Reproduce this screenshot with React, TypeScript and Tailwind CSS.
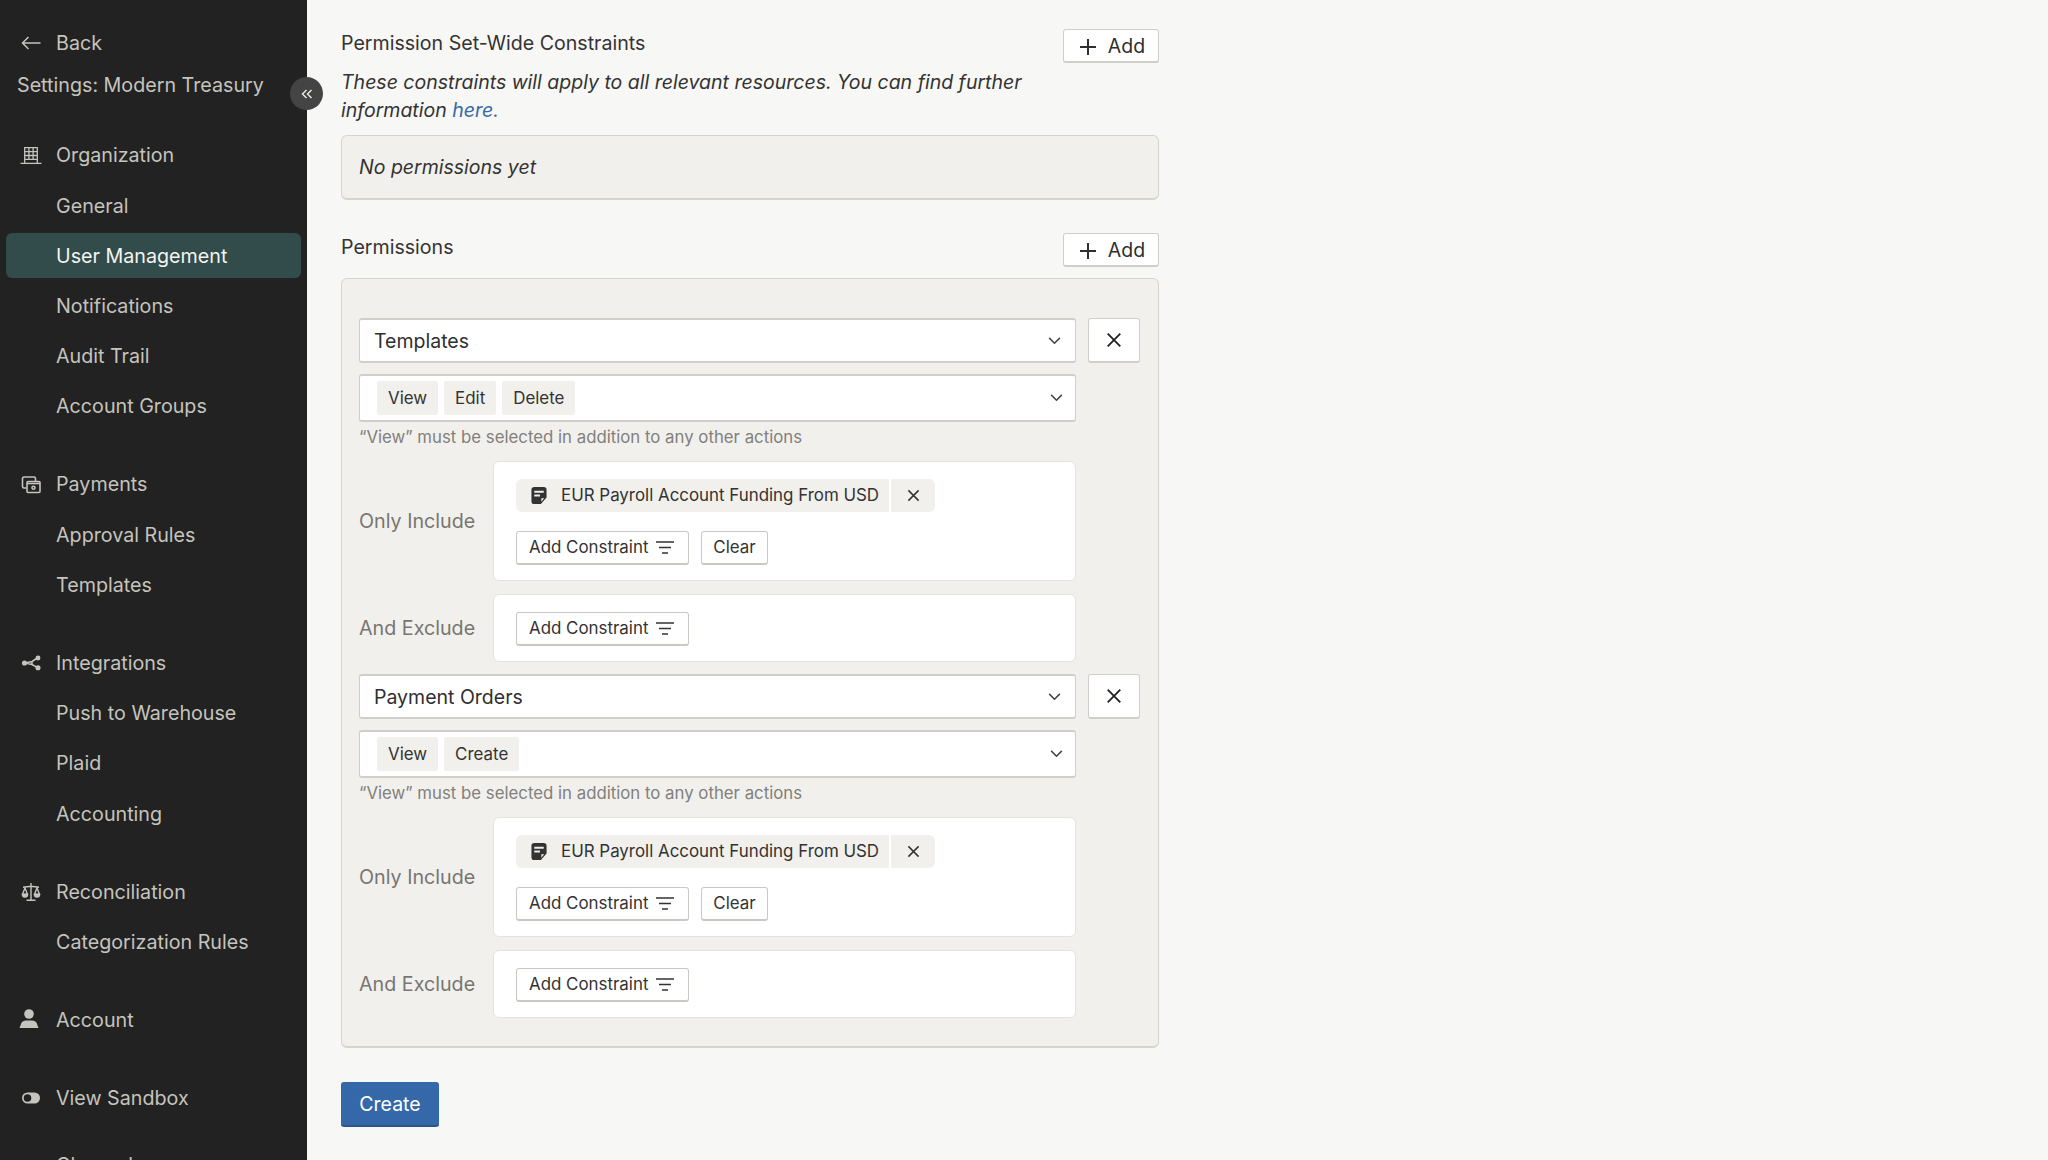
import { ReactNode } from "react";

const iconClass = "h-6 w-6 shrink-0";

function BackIcon() {
  return (
    <svg viewBox="0 0 24 24" className={iconClass} fill="none" stroke="currentColor" strokeWidth="1.5">
      <path d="M21.500 12H3.500M9.500 6l-6 6 6 6" />
    </svg>
  );
}

function BuildingIcon() {
  return (
    <svg viewBox="0 0 24 24" className={iconClass} fill="none" stroke="currentColor" strokeWidth="1.300">
      <path d="M1.500 20.300h21M5.700 20V4.700h12.600V20M5.700 8.700h12.600M5.700 12.500h12.600M5.700 16.300h12.600M9.900 4.700v11.600M14.100 4.700v11.600" />
    </svg>
  );
}

function PaymentsIcon() {
  return (
    <svg viewBox="0 0 24 24" className={iconClass} fill="none" stroke="currentColor" strokeWidth="1.600">
      <path d="M7.500 16H5a1.500 1.500 0 0 1-1.500-1.500v-8A1.500 1.500 0 0 1 5 5h10a1.500 1.500 0 0 1 1.500 1.500V9.500" />
      <rect x="8" y="9.500" width="13" height="11" rx="1" />
      <path d="M8 11.500h13" />
      <circle cx="14.500" cy="15.800" r="1.500" />
    </svg>
  );
}

function IntegrationsIcon() {
  return (
    <svg viewBox="0 0 24 24" className={iconClass} fill="currentColor" stroke="currentColor" strokeWidth="1.500">
      <path d="M6 12l7-1.500 5.500-3.500M13 10.500l0 3 5.500 3.200M6 12l7 1.500" fill="none" />
      <circle cx="5.500" cy="12" r="1.800" />
      <circle cx="19" cy="7" r="1.700" />
      <circle cx="19" cy="16.700" r="1.800" />
    </svg>
  );
}

function ScaleIcon() {
  return (
    <svg viewBox="0 0 24 24" className={iconClass} fill="currentColor" stroke="currentColor" strokeWidth="1.400">
      <path d="M12 3v17M7.500 20.300h9M4 7.300l8-1 8 1" fill="none" />
      <path d="M6 8l-2.500 6.200h5zM18 8l-2.500 6.200h5z" fill="none" />
      <path d="M3.500 14.500a2.500 2.500 0 0 0 5 0zM15.500 14.500a2.500 2.500 0 0 0 5 0z" />
    </svg>
  );
}

function PersonIcon() {
  return (
    <svg viewBox="0 0 24 24" className={iconClass} fill="currentColor">
      <circle cx="10" cy="6" r="4.800" />
      <path d="M.500 20l1.800-4.800C3 13.500 5 12.500 7 12.500h6c2 0 4 1 4.700 2.700L19.500 20z" />
    </svg>
  );
}

function ToggleIcon() {
  return (
    <svg viewBox="0 0 24 24" className={iconClass} fill="currentColor">
      <path
        fillRule="evenodd"
        d="M8.500 6.500h7a5.500 5.500 0 0 1 0 11h-7a5.500 5.500 0 0 1 0-11zm0 1.700a3.800 3.800 0 1 0 0 7.600 3.800 3.800 0 0 0 0-7.600z"
      />
    </svg>
  );
}

function PlusIcon() {
  return (
    <svg viewBox="0 0 18 18" className="h-[18px] w-[18px]" fill="none" stroke="currentColor" strokeWidth="2">
      <path d="M9 1v16M1 9h16" />
    </svg>
  );
}

function CloseIcon({ size }: { size: string }) {
  return (
    <svg viewBox="0 0 14 14" className={size} fill="none" stroke="currentColor" strokeWidth="1.600">
      <path d="M1.500 1.500l11 11M12.500 1.500l-11 11" />
    </svg>
  );
}

function Chevron() {
  return (
    <svg viewBox="0 0 14 9" className="h-[8px] w-[13px] text-[#444]" fill="none" stroke="currentColor" strokeWidth="1.700">
      <path d="M1 1l6 6 6-6" />
    </svg>
  );
}

function FilterIcon() {
  return (
    <svg viewBox="0 0 18 13" className="h-[13px] w-[18px]" fill="none" stroke="currentColor" strokeWidth="1.500">
      <path d="M0 1h18M3 6.500h12M6 12h6" />
    </svg>
  );
}

function NoteIcon() {
  return (
    <svg viewBox="0 0 16 18" className="h-[17px] w-[16px] text-[#333]" fill="currentColor">
      <path
        fillRule="evenodd"
        d="M3 0h10a3 3 0 0 1 3 3v8l-6 7H3a3 3 0 0 1-3-3V3a3 3 0 0 1 3-3zM3 4v2h10V4zM3 8v2h6V8zM10.500 12v3.500l3-3.500z"
      />
    </svg>
  );
}

function NavRow({ label, icon, active }: { label: string; icon?: ReactNode; active?: boolean }) {
  return (
    <div
      className={`mx-[6px] flex h-[50.2px] items-center ${active ? "my-[2.500px] !h-[45.200px] rounded-[6px] bg-[#324b4b] text-[#f4f4f1]" : ""}`}
    >
      <span className="flex w-[50px] justify-center">{icon}</span>
      <span className="pt-[2px]">{label}</span>
    </div>
  );
}

function Sidebar() {
  return (
    <aside className="relative h-[1160px] w-[307px] shrink-0 bg-[#222222] pt-[18px] text-[19.700px] text-[#c5c4be]">
      <div className="h-[50px]">
        <NavRow label="Back" icon={<BackIcon />} />
      </div>
      <div className="flex h-[34px] items-center pl-[17px] pt-[1px]">Settings: Modern Treasury</div>
      <button className="absolute left-[290px] top-[77px] flex h-[33px] w-[33px] items-center justify-center rounded-full bg-[#444444] text-[#e6e6e2]">
        <svg viewBox="0 0 12 10" className="h-[10px] w-[12px]" fill="none" stroke="currentColor" strokeWidth="1.500">
          <path d="M5.500 1l-4 4 4 4M10.500 1l-4 4 4 4" />
        </svg>
      </button>
      <nav className="mt-[28px] flex flex-col gap-[28px]">
        <div>
          <NavRow label="Organization" icon={<BuildingIcon />} />
          <NavRow label="General" />
          <NavRow label="User Management" active />
          <NavRow label="Notifications" />
          <NavRow label="Audit Trail" />
          <NavRow label="Account Groups" />
        </div>
        <div>
          <NavRow label="Payments" icon={<PaymentsIcon />} />
          <NavRow label="Approval Rules" />
          <NavRow label="Templates" />
        </div>
        <div>
          <NavRow label="Integrations" icon={<IntegrationsIcon />} />
          <NavRow label="Push to Warehouse" />
          <NavRow label="Plaid" />
          <NavRow label="Accounting" />
        </div>
        <div>
          <NavRow label="Reconciliation" icon={<ScaleIcon />} />
          <NavRow label="Categorization Rules" />
        </div>
        <NavRow label="Account" icon={<PersonIcon />} />
        <NavRow label="View Sandbox" icon={<ToggleIcon />} />
        <div className="-mt-[12px]">
          <NavRow label="Changelog" />
        </div>
      </nav>
    </aside>
  );
}

function AddButton() {
  return (
    <button className="flex h-[34px] w-[96px] items-center justify-center gap-[11px] rounded-[3px] border border-[#cfcec9] border-b-[2px] bg-white pl-[2px] pt-[2px] text-[19.500px] text-[#2f2f2f]">
      <PlusIcon />
      Add
    </button>
  );
}

function ConstraintButton() {
  return (
    <button className="flex h-[34px] w-[173px] items-center gap-[8px] rounded-[3px] border border-[#c9c8c3] border-b-[2px] bg-white pl-[12px] text-[16.900px] text-[#333]">
      Add Constraint
      <FilterIcon />
    </button>
  );
}

function ActionTag({ label }: { label: string }) {
  return <span className="flex h-[34px] items-center rounded-[2px] bg-[#f1f0ed] px-[11px] pt-[1px] text-[16.900px] text-[#333]">{label}</span>;
}

function ConstraintCard({ label, children }: { label: string; children: ReactNode }) {
  return (
    <div className="flex items-center">
      <span className="w-[134px] shrink-0 pt-[2px] text-[19.700px] text-[#777672]">{label}</span>
      <div className="flex-1 rounded-[6px] border border-[#e4e3df] bg-white px-[22px] pb-[15px] pt-[17px]">{children}</div>
    </div>
  );
}

function PermissionBlock({ resource, actions }: { resource: string; actions: string[] }) {
  return (
    <div className="flex flex-col">
      <div className="flex gap-[12px]">
        <div className="flex h-[45px] w-[717px] items-center justify-between rounded-[3px] border border-[#cfcec9] border-t-[2px] border-b-[2px] bg-white pl-[14px] pr-[14px] text-[19.500px] text-[#2f2f2f]">
          <span className="pt-[2px]">{resource}</span>
          <Chevron />
        </div>
        <button className="flex h-[45px] w-[52px] items-center justify-center rounded-[3px] border border-[#cfcec9] border-b-[2px] bg-white text-[#222]">
          <CloseIcon size="h-[16px] w-[16px]" />
        </button>
      </div>
      <div className="mt-[11px] flex h-[48px] w-[717px] items-center justify-between rounded-[3px] border border-[#cfcec9] border-t-[2px] border-b-[2px] bg-white pl-[17px] pr-[12px]">
        <div className="flex gap-[6px]">
          {actions.map((action) => (
            <ActionTag key={action} label={action} />
          ))}
        </div>
        <Chevron />
      </div>
      <p className="mt-[5px] h-[26px] text-[16.800px] leading-[20px] text-[#81807b]">“View” must be selected in addition to any other actions</p>
      <div className="mt-[8px] flex w-[717px] flex-col gap-[13px]">
        <ConstraintCard label="Only Include">
          <div className="flex h-[33px] w-[419px] items-center rounded-[6px] bg-[#f1f0ed] text-[16.900px] text-[#333]">
            <span className="flex w-[45px] justify-center">
              <NoteIcon />
            </span>
            <span className="flex-1 whitespace-nowrap">EUR Payroll Account Funding From USD</span>
            <span className="flex h-[33px] w-[46px] items-center justify-center border-l-[2px] border-white">
              <CloseIcon size="h-[13px] w-[13px]" />
            </span>
          </div>
          <div className="mt-[19px] flex gap-[12px]">
            <ConstraintButton />
            <button className="h-[34px] w-[67px] rounded-[3px] border border-[#c9c8c3] border-b-[2px] bg-white text-[16.900px] text-[#333]">Clear</button>
          </div>
        </ConstraintCard>
        <ConstraintCard label="And Exclude">
          <ConstraintButton />
        </ConstraintCard>
      </div>
    </div>
  );
}

export default function App() {
  return (
    <div className="flex h-[1160px] overflow-hidden bg-[#f7f7f5] font-['Inter',sans-serif]">
      <Sidebar />
      <main className="box-content w-[818px] pl-[34px] pt-[29px]">
        <section>
          <div className="flex items-start justify-between">
            <h2 className="pt-[1px] text-[19.600px] leading-[26px] text-[#333]">Permission Set-Wide Constraints</h2>
            <AddButton />
          </div>
          <p className="mt-[5px] w-[740px] text-[19.500px] italic leading-[28px] text-[#333]">
            These constraints will apply to all relevant resources. You can find further information{" "}
            <a className="text-[#3568a9]">here.</a>
          </p>
          <div className="mt-[11px] flex h-[65px] items-center rounded-[6px] border border-[#d5d4cf] border-b-[2px] bg-[#f1f0ed] px-[17px] pt-[2px] text-[19.500px] italic text-[#333]">
            No permissions yet
          </div>
        </section>
        <section className="mt-[33px]">
          <div className="flex items-start justify-between">
            <h2 className="pt-[1px] text-[19.600px] leading-[26px] text-[#333]">Permissions</h2>
            <AddButton />
          </div>
          <div className="mt-[11px] flex flex-col gap-[12px] rounded-[6px] border border-[#d5d4cf] border-b-[2px] bg-[#f1f0ed] pb-[28px] pl-[17px] pt-[39px]">
            <PermissionBlock resource="Templates" actions={["View", "Edit", "Delete"]} />
            <PermissionBlock resource="Payment Orders" actions={["View", "Create"]} />
          </div>
        </section>
        <button className="mt-[34px] h-[45px] w-[98px] rounded-[3px] border-b-[2px] border-[#2a5690] bg-[#3568a9] pt-[2px] text-[19.500px] text-white">Create</button>
      </main>
    </div>
  );
}
